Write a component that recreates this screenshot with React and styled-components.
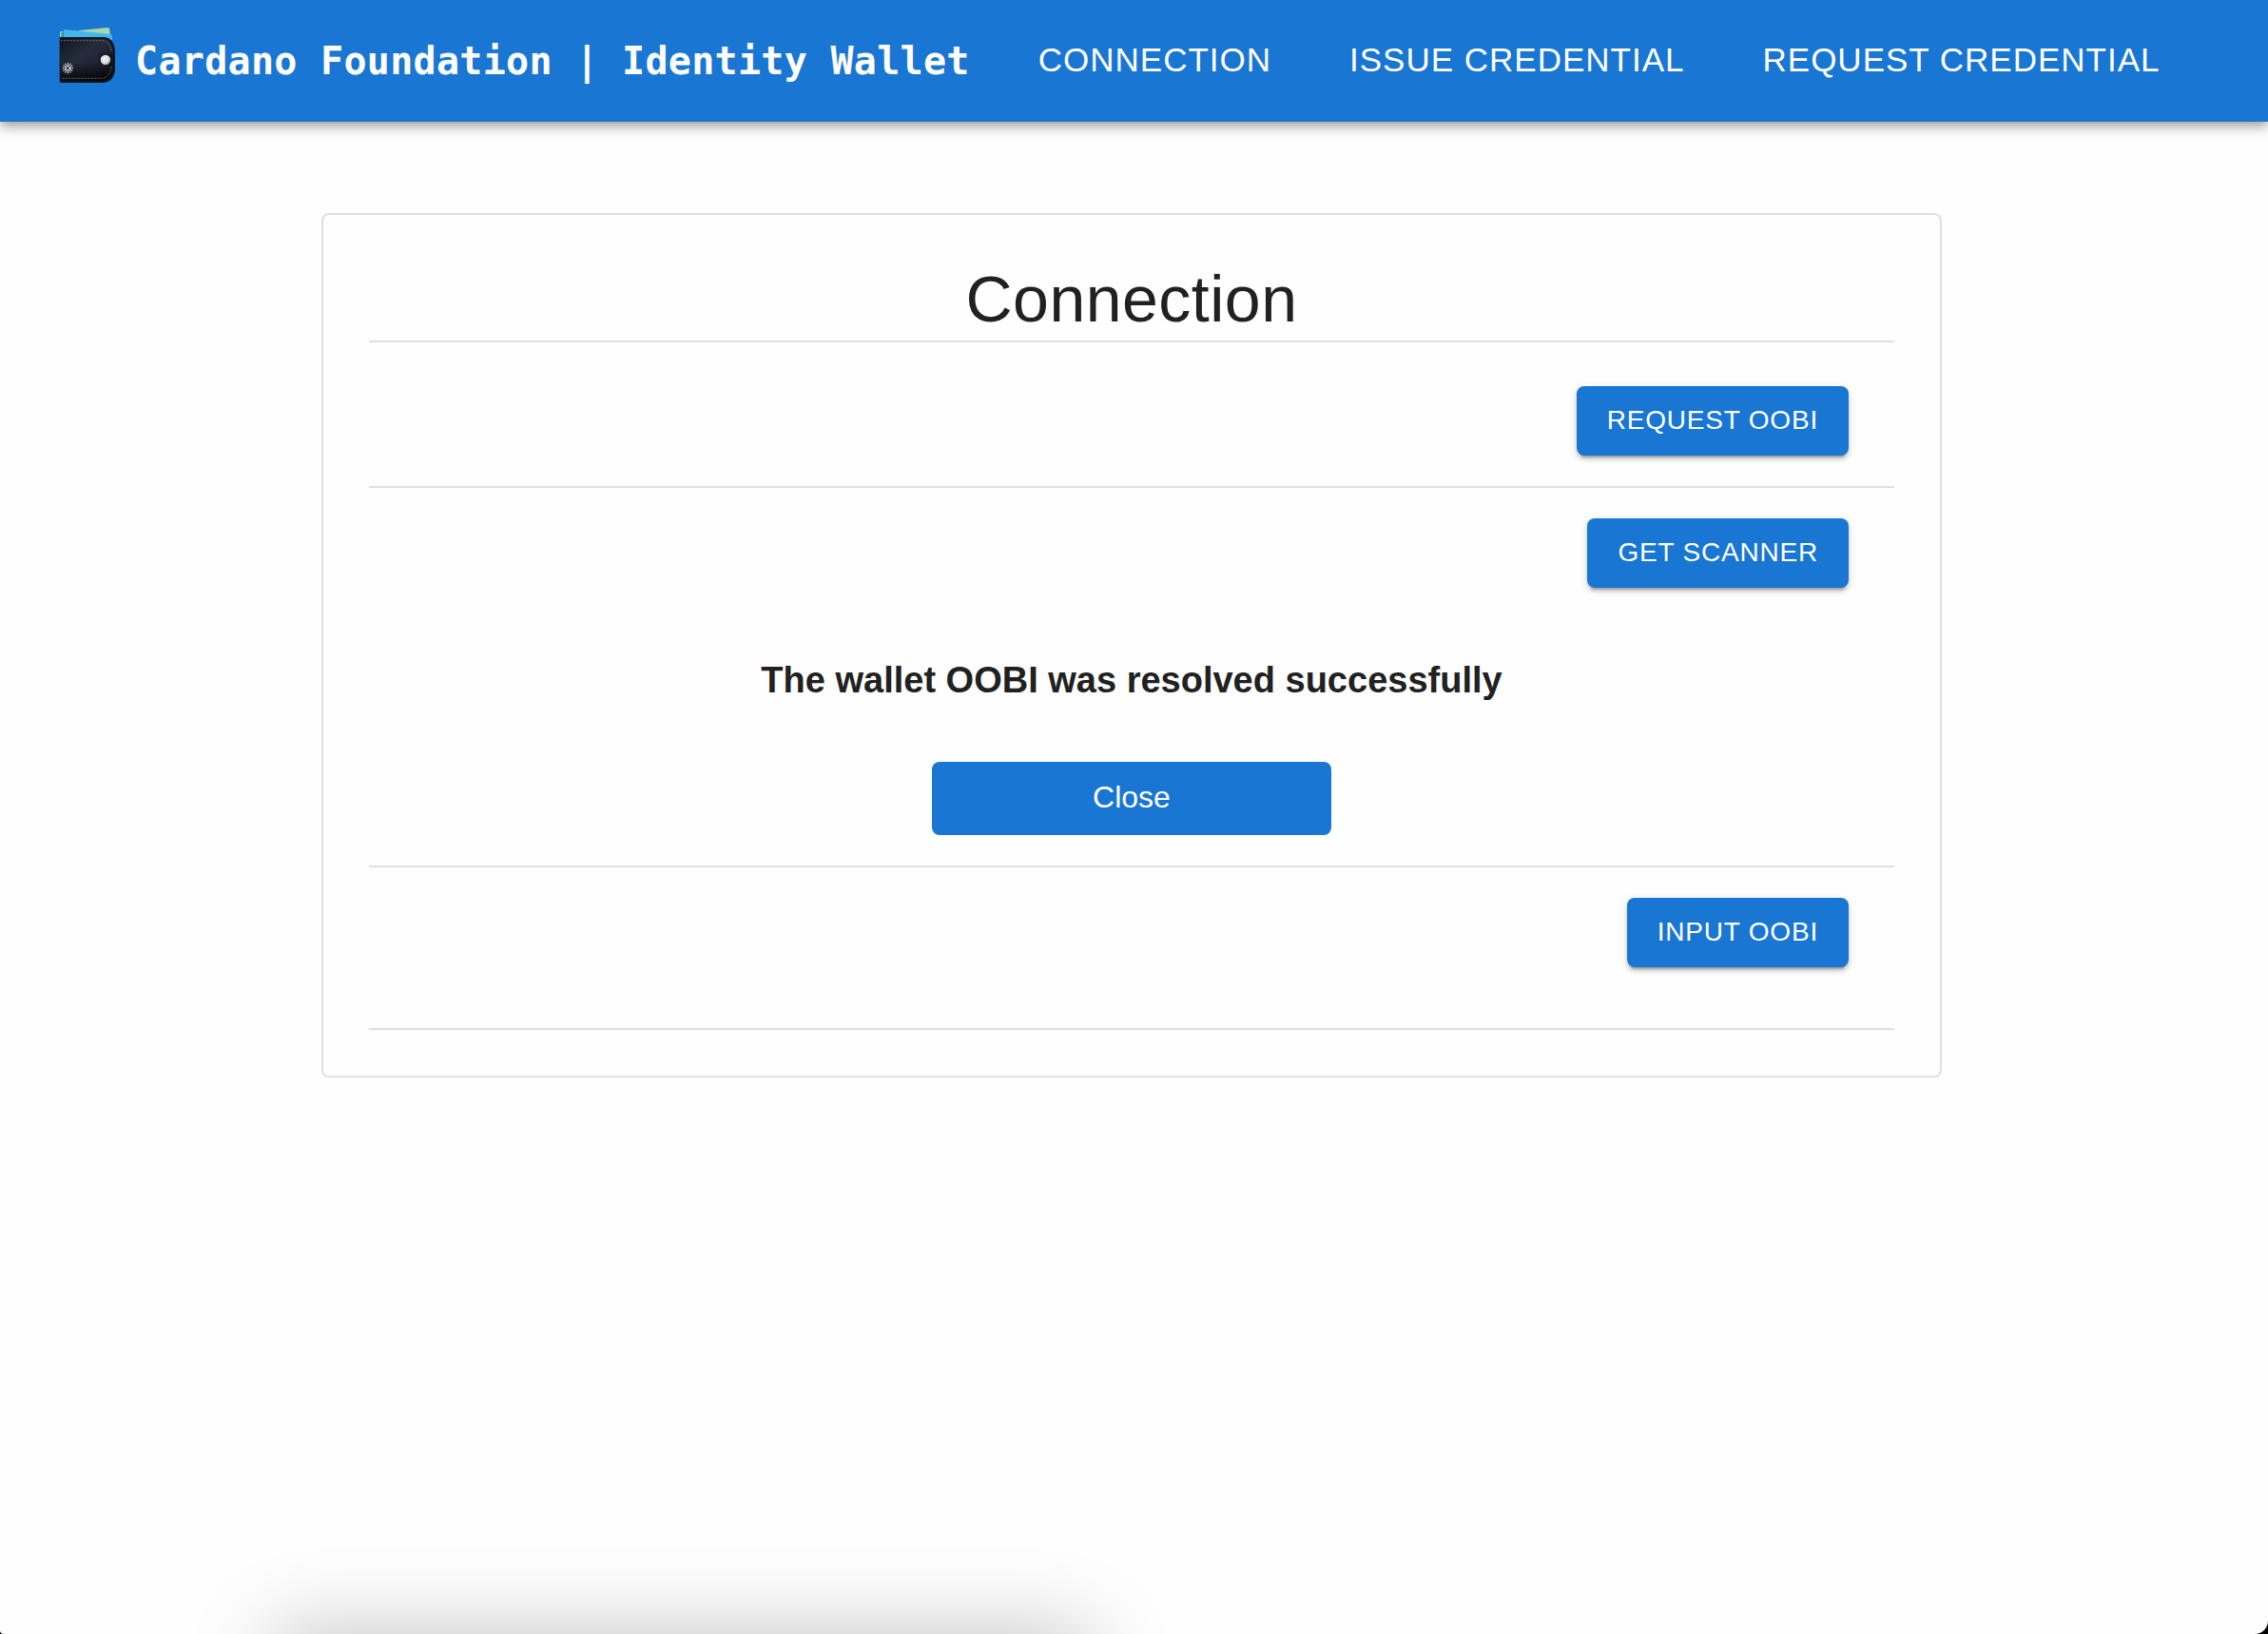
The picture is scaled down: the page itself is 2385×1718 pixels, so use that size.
import React from "react";
import styled, { createGlobalStyle } from "styled-components";

const GlobalStyle = createGlobalStyle`
  *, *::before, *::after { box-sizing: border-box; }
  html, body { margin: 0; background: #fefefe; }
  body {
    color: #212121;
    font-family: Helvetica, "Liberation Sans", Arial, sans-serif;
    font-size: 32px;
    line-height: 48px;
    -webkit-font-smoothing: antialiased;
  }
`;

const AppBar = styled.header`
  display: flex;
  align-items: center;
  gap: 72px;
  min-height: 128px;
  padding: 0 61px;
  background: #1976d2;
  color: #fff;
  box-shadow:
    0 4px 8px -2px rgba(0, 0, 0, 0.2),
    0 8px 10px 0 rgba(0, 0, 0, 0.14),
    0 2px 20px 0 rgba(0, 0, 0, 0.12);
`;

const Brand = styled.a`
  display: flex;
  align-items: flex-start;
  gap: 21px;
  height: 72px;
  color: inherit;
  text-decoration: none;
  font-family: "DejaVu Sans Mono", monospace;
  font-size: 40px;
  font-weight: 700;
  line-height: 72px;
  letter-spacing: 0.0075em;
  white-space: nowrap;
`;

const Logo = styled.svg`
  width: 60px;
  height: 60px;
  flex: none;
`;

const Nav = styled.nav`
  display: flex;
  gap: 82px;
`;

const NavLink = styled.a`
  padding-bottom: 2px;
  color: inherit;
  font-size: 35px;
  line-height: 64px;
  letter-spacing: 0.02857em;
  text-decoration: none;
  text-transform: uppercase;
  white-space: nowrap;
`;

const Main = styled.main`
  padding: 96px 343px 96px 338px;
`;

const Card = styled.section`
  padding: 48px;
  border: 2px solid #e0e0e0;
  border-radius: 8px;
`;

const Title = styled.h1`
  margin: 0;
  padding-bottom: 4px;
  font-size: 68px;
  font-weight: 400;
  line-height: 80px;
  letter-spacing: 0.00735em;
  text-align: center;
`;

const Section = styled.div`
  display: flex;
  flex-direction: column;
  padding-top: ${(p) => p.$top || 32}px;
  padding-bottom: ${(p) => p.$bottom || 32}px;
  border-bottom: 2px solid #e0e0e0;

  ${Title} + & {
    border-top: 2px solid #e0e0e0;
  }
`;

const ActionButton = styled.button`
  align-self: flex-end;
  margin-right: 48px;
  padding: 11px 32px 13px;
  border: 0;
  border-radius: 8px;
  background: #1976d2;
  color: #fff;
  font-family: inherit;
  font-size: 28px;
  line-height: 49px;
  letter-spacing: 0.02857em;
  text-transform: uppercase;
  cursor: pointer;
  box-shadow:
    0 6px 2px -4px rgba(0, 0, 0, 0.2),
    0 4px 4px 0 rgba(0, 0, 0, 0.14),
    0 2px 10px 0 rgba(0, 0, 0, 0.12);
`;

const Message = styled.h2`
  margin: 72px 0 60px;
  font-size: 38px;
  font-weight: 700;
  line-height: 51px;
  text-align: center;
`;

const CloseButton = styled.button`
  align-self: center;
  width: 420px;
  max-width: 100%;
  padding: 13px 32px 15px;
  border: 0;
  border-radius: 8px;
  background: #1976d2;
  color: #fff;
  font-family: inherit;
  font-size: 32px;
  line-height: 49px;
  cursor: pointer;
`;

const DockShadow = styled.div`
  position: fixed;
  top: 100%;
  left: 12%;
  width: 36%;
  height: 400px;
  box-shadow: 0 0 84px rgba(0, 0, 0, 0.24);
  pointer-events: none;
`;

const WindowCorners = styled.div`
  position: fixed;
  inset: 0;
  border-radius: 0 0 14px 4px;
  box-shadow: 0 0 0 20px #000;
  pointer-events: none;
`;

function WalletLogo() {
  const rays = [0, 30, 60, 90, 120, 150, 180, 210, 240, 270, 300, 330];
  return (
    <Logo viewBox="63 54 180 180" aria-hidden="true">
      <defs>
        <linearGradient id="leather" x1="0" y1="0" x2="1" y2="1">
          <stop offset="0" stopColor="#111620" />
          <stop offset="0.4" stopColor="#252c3c" />
          <stop offset="0.75" stopColor="#1a1f2b" />
          <stop offset="1" stopColor="#080a0e" />
        </linearGradient>
        <linearGradient id="shade" x1="0" y1="0" x2="0" y2="1">
          <stop offset="0.55" stopColor="#000" stopOpacity="0" />
          <stop offset="1" stopColor="#000" stopOpacity="0.75" />
        </linearGradient>
        <radialGradient id="snap" cx="0.4" cy="0.4" r="0.6">
          <stop offset="0" stopColor="#f4f4f4" />
          <stop offset="0.7" stopColor="#dcdcdc" />
          <stop offset="1" stopColor="#9a9a9a" />
        </radialGradient>
      </defs>
      <path d="M69 90V73q0-4 4-4h5v21z" fill="#a9d9a5" />
      <path d="M73 90V72h7v18z" fill="#2c8fc4" />
      <path d="M130 66l90-9q6 0 6 5l2 28H130z" fill="#a6d6ae" />
      <path d="M80 90V67q0-5 5-4l144 15q5 1 5 5v14H80z" fill="#46b5ea" />
      <path d="M68 87H208q34 2 35 50v50q-2 42-37 44H73q-5 0-5-6z" fill="#11151d" />
      <path d="M70 92H206q29 2 31 46v46q-2 38-33 42H74q-4 0-4-5z" fill="url(#leather)" />
      <path d="M70 92H206q29 2 31 46v46q-2 38-33 42H74q-4 0-4-5z" fill="url(#shade)" />
      <path
        d="M72 98H207q21 5 24 34M231 180q-4 34-28 37H72"
        fill="none"
        stroke="#858179"
        strokeWidth="2"
        strokeDasharray="7 3"
      />
      <path d="M244 136h-32q-19 3-20 21 1 18 20 20h32z" fill="#10141c" />
      <path d="M243 139h-28q-17 2-18 18" fill="none" stroke="#2c3342" strokeWidth="2" />
      <ellipse cx="213" cy="159" rx="16" ry="16" fill="url(#snap)" />
      <g transform="translate(94 185)" stroke="#fff" fill="#fff">
        <circle r="6" fill="none" strokeWidth="4" strokeDasharray="4 2" />
        {rays.map((a) => (
          <g key={a} transform={`rotate(${a})`}>
            <path d="M0-8v-4" strokeWidth="3" />
            <circle cy="-15" r="2" stroke="none" />
          </g>
        ))}
      </g>
    </Logo>
  );
}

const links = ["Connection", "Issue Credential", "Request Credential"];

export default function App() {
  return (
    <>
      <GlobalStyle />
      <AppBar>
        <Brand href="#home">
          <WalletLogo />
          Cardano Foundation | Identity Wallet
        </Brand>
        <Nav>
          {links.map((label) => (
            <NavLink key={label} href={"#" + label.toLowerCase().replace(" ", "-")}>
              {label}
            </NavLink>
          ))}
        </Nav>
      </AppBar>
      <Main>
        <Card>
          <Title>Connection</Title>
          <Section $top={46}>
            <ActionButton type="button">Request OOBI</ActionButton>
          </Section>
          <Section>
            <ActionButton type="button">Get Scanner</ActionButton>
            <Message>The wallet OOBI was resolved successfully</Message>
            <CloseButton type="button">Close</CloseButton>
          </Section>
          <Section $bottom={64}>
            <ActionButton type="button">Input OOBI</ActionButton>
          </Section>
        </Card>
      </Main>
      <DockShadow />
      <WindowCorners />
    </>
  );
}
